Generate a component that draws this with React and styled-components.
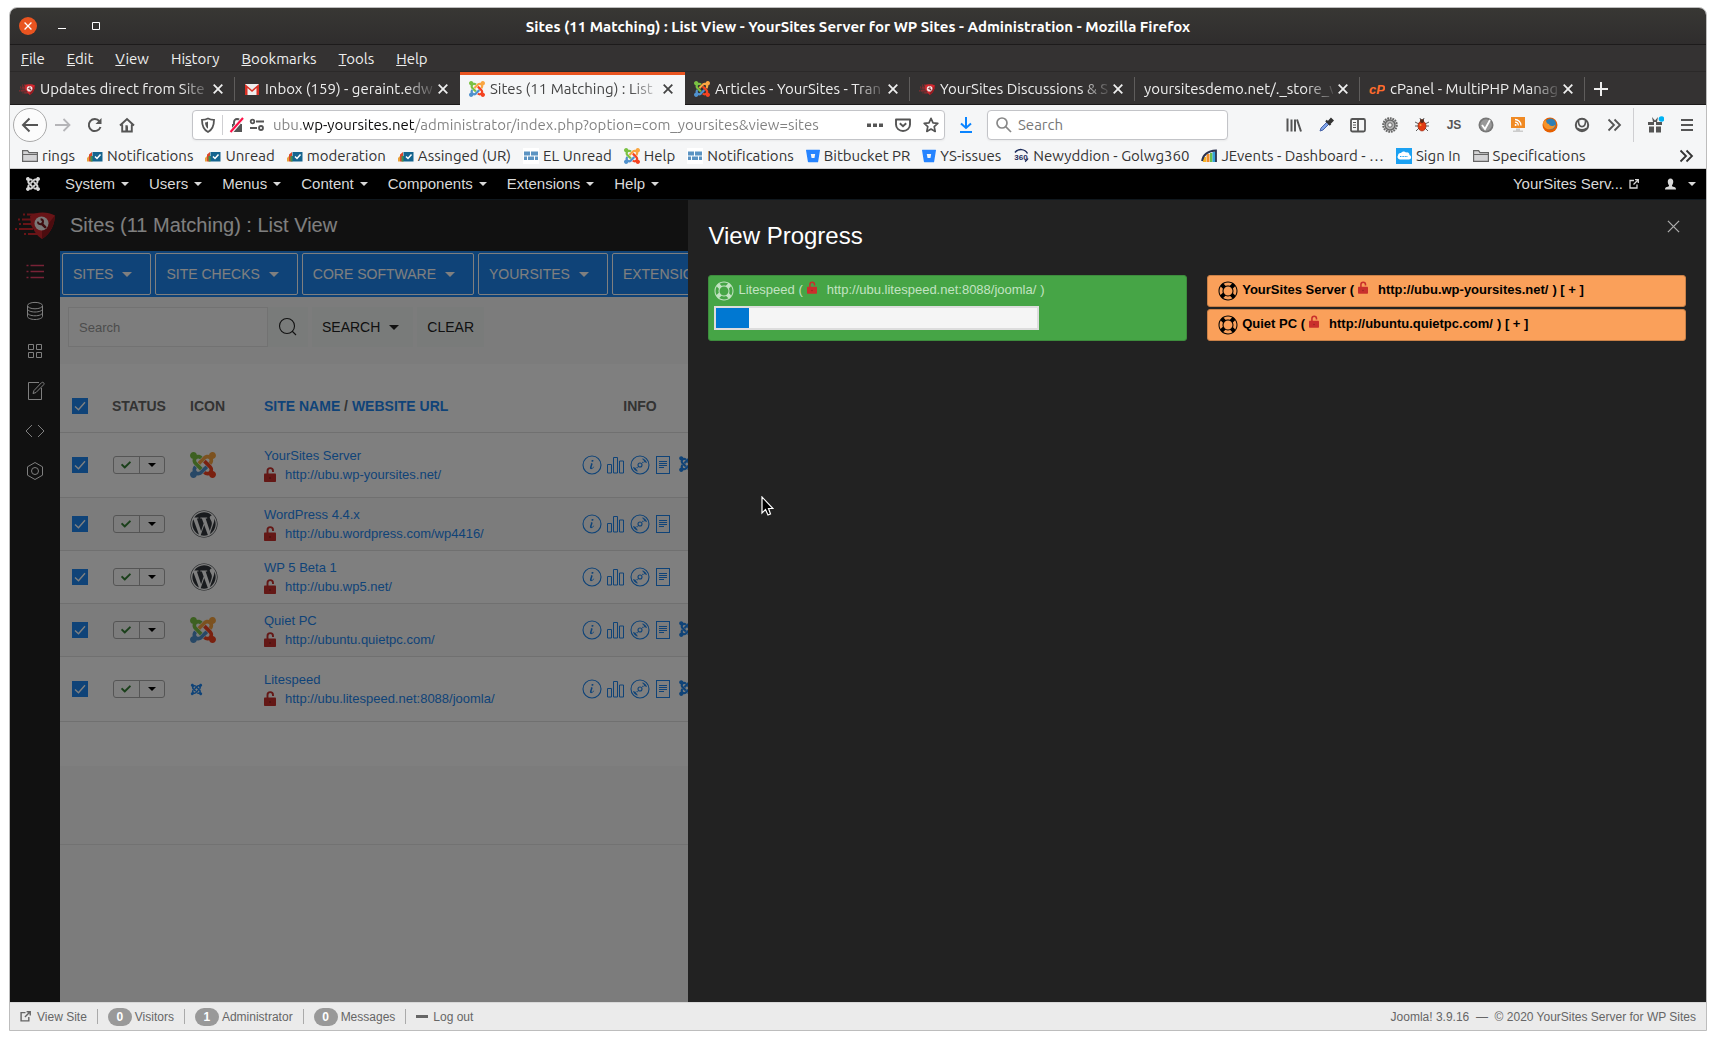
import React from "react";
import styled, { createGlobalStyle, css } from "styled-components";
import { FaJoomla, FaWordpress, FaCheck } from "react-icons/fa";
import { SiBitbucket } from "react-icons/si";

const ui = `"Ubuntu", "Noto Sans", "Open Sans", sans-serif`;
const web = `"Liberation Sans", Arial, sans-serif`;

const Global = createGlobalStyle`
  *, *::before, *::after { box-sizing: border-box; }
  body { margin: 0; background: #fff; font-family: ${web}; }
  button, input { font: inherit; color: inherit; margin: 0; }
  button { padding: 0; border: 0; background: none; cursor: pointer; }
  a { color: inherit; text-decoration: none; }
  svg { display: block; flex: none; }
`;

/* ---------- window frame ---------- */

const Screen = styled.div`
  min-height: 100vh;
  padding: 7px 9px 9px;
  display: flex;
`;

const Window = styled.div`
  flex: 1;
  min-width: 0;
  display: flex;
  flex-direction: column;
  border: 1px solid #bdbdbd;
  border-radius: 8px 8px 0 0;
  overflow: hidden;
  font-family: ${ui};
`;

const TitleBar = styled.header`
  display: grid;
  grid-template-columns: 120px 1fr 120px;
  align-items: center;
  height: 37px;
  padding: 0 9px;
  background: linear-gradient(#383734, #2f2d2d);
  border-bottom: 1px solid #1d1b1b;
  color: #fff;
`;

const WindowTitle = styled.h1`
  margin: 0;
  padding-top: 2px;
  text-align: center;
  font-size: 15px;
  line-height: 20px;
  font-weight: 700;
  white-space: nowrap;
`;

const WindowButtons = styled.div`
  display: flex;
  align-items: center;
  gap: 16px;
`;

const WindowButton = styled.button`
  display: grid;
  place-items: center;
  width: 18px;
  height: 18px;
  border-radius: 50%;
  background: ${(p) => (p.$close ? "#e95420" : "transparent")};
`;

const MenuBar = styled.nav`
  display: flex;
  gap: 22px;
  align-items: center;
  height: 27px;
  padding: 2px 11px 0;
  background: #343232;
  border-bottom: 1px solid #2b2929;
  color: #eee;
`;

const MenuItem = styled.button`
  font-size: 15px;
  line-height: 20px;
`;

const TabStrip = styled.div`
  display: flex;
  height: 33px;
  background: #343232;
  box-shadow: inset 0 -1px #1b1919;
`;

const Tab = styled.div`
  position: relative;
  flex: 0 1 225px;
  min-width: 0;
  display: flex;
  align-items: center;
  gap: 5px;
  padding: 1px 12px 0 9px;
  color: #eee;
  ${(p) =>
    p.$active
      ? css`
          background: #f5f6f7;
          color: #444;
          box-shadow: inset 0 3px #e95420;
        `
      : css`
          &::after {
            content: "";
            position: absolute;
            right: 0;
            top: 5px;
            bottom: 4px;
            width: 1px;
            background: ${p.$bare ? "transparent" : "#5f5d5c"};
          }
        `}
`;

const TabLabel = styled.button`
  flex: 1;
  min-width: 0;
  text-align: left;
  font-size: 15px;
  line-height: 20px;
  white-space: nowrap;
  overflow: hidden;
  mask-image: linear-gradient(to right, #000 calc(100% - 28px), rgba(0, 0, 0, 0.15));
`;

const IconButton = styled.button`
  display: grid;
  place-items: center;
  width: ${(p) => p.$w || 16}px;
  height: ${(p) => p.$h || 20}px;
  flex: none;
  color: ${(p) => p.$color || "inherit"};
`;

const NewTab = styled(IconButton)`
  width: 32px;
  height: 33px;
  color: #eee;
`;

/* ---------- browser toolbar ---------- */

const NavBar = styled.div`
  display: flex;
  align-items: center;
  height: 40px;
  padding: 0 3px;
  background: #f5f6f7;
  color: #555;
`;

const BackButton = styled(IconButton)`
  width: 34px;
  height: 34px;
  border: 1px solid #aaa;
  border-radius: 50%;
  background: #fcfcfc;
`;

const Field = styled.div`
  display: flex;
  align-items: center;
  height: 30px;
  border: 1px solid #c3c4c8;
  border-radius: 4px;
  background: #fff;
  box-shadow: 0 1px 2px rgba(0, 0, 0, 0.05);
`;

const UrlField = styled(Field)`
  flex: 744 1 0;
  margin-left: 49px;
  padding-left: 7px;
`;

const SearchField = styled(Field)`
  flex: 223 1 0;
  padding: 0 8px;
`;

const TextInput = styled.input`
  flex: 1;
  min-width: 0;
  border: 0;
  outline: 0;
  background: transparent;
  font-size: 15px;
  line-height: 20px;
  padding: 0 6px;
  color: #333;
  &::placeholder {
    color: #777;
    opacity: 1;
  }
`;

const UrlInput = styled(TextInput)`
  padding: 0 0 0 4px;
  color: transparent;
  background: linear-gradient(to right, #808080 33px, #0c0c0d 33px, #0c0c0d 145px, #808080 145px);
  background-clip: text;
  -webkit-background-clip: text;
`;

const Divider = styled.span`
  width: 1px;
  height: ${(p) => p.$h}px;
  margin: ${(p) => p.$m || "0"};
  background: ${(p) => p.$color || "#cfcfd2"};
`;

const Extensions = styled.div`
  display: flex;
  align-items: center;
  margin-left: 50px;
`;

const JsButton = styled(IconButton)`
  font: 700 12px/16px ${web};
`;

const BookmarkBar = styled.nav`
  display: flex;
  align-items: center;
  gap: 12px;
  height: 24px;
  padding: 0 12px 2px;
  background: #f5f6f7;
  border-bottom: 1px solid #ccc;
  color: #333;
`;

const Bookmark = styled.a`
  display: flex;
  align-items: center;
  gap: 4px;
  font-size: 15px;
  line-height: 20px;
  white-space: nowrap;
`;

const Grow = styled.span`
  flex: 1;
`;

/* ---------- Joomla admin ---------- */

const AdminBar = styled.nav`
  display: flex;
  align-items: center;
  gap: 20px;
  height: 31px;
  padding: 0 10px 0 15px;
  background: #000;
  border-bottom: 1px solid #10181e;
  color: #d9d9d9;
  font-family: ${web};
`;

const AdminItem = styled.button`
  display: flex;
  align-items: center;
  gap: 6px;
  font-size: 15px;
  line-height: 20px;
  white-space: nowrap;
`;

const AdminLogo = styled.a`
  margin-right: 4px;
`;

const AdminLink = styled.a`
  display: flex;
  align-items: center;
  gap: 6px;
  font-size: 15px;
  line-height: 20px;
  margin-right: 6px;
`;

const Caret = styled.span`
  width: 0;
  height: 0;
  border: ${(p) => p.$s || 4}px solid transparent;
  border-top-color: currentColor;
  border-bottom: 0;
`;

const Stage = styled.div`
  position: relative;
  flex: 1;
  display: flex;
  overflow: hidden;
  font-family: ${web};
`;

const SideRail = styled.aside`
  width: 50px;
  flex: none;
  display: flex;
  flex-direction: column;
  align-items: center;
  background: #222;
  color: #fff;
`;

const RailLogo = styled.div`
  display: grid;
  place-items: center;
  height: 51px;
`;

const RailButton = styled.button`
  display: grid;
  place-items: center;
  width: 50px;
  height: 40px;
  color: ${(p) => (p.$active ? "#f0446c" : "inherit")};
`;

const Content = styled.main`
  flex: 1;
  min-width: 0;
  display: flex;
  flex-direction: column;
  background: #f8f8f8;
`;

const PageHeading = styled.h2`
  margin: 0;
  padding: 0 10px;
  height: 51px;
  background: #222;
  color: #fff;
  font-weight: 400;
  font-size: 20px;
  line-height: 50px;
`;

const ActionBar = styled.div`
  display: flex;
  gap: 4px;
  padding: 2px;
  height: 46px;
  background: #1e87f0;
`;

const ActionButton = styled.button`
  display: flex;
  align-items: center;
  gap: 9px;
  padding: 0 18px 0 10px;
  border: 1px solid #fff;
  border-radius: 2px;
  color: #fff;
  font-size: 14px;
  line-height: 20px;
  text-transform: uppercase;
  white-space: nowrap;
`;

const FilterBar = styled.div`
  display: flex;
  padding: 10px 8px 17px;
`;

const FilterInput = styled.input`
  width: 200px;
  height: 40px;
  padding: 0 10px;
  border: 1px solid #e5e5e5;
  background: #fbfbfb;
  font-size: 13px;
  &::placeholder {
    color: #999;
    opacity: 1;
  }
`;

const FilterButton = styled.button`
  display: flex;
  align-items: center;
  justify-content: center;
  gap: 9px;
  height: 40px;
  padding: 0 ${(p) => (p.$menu ? 14 : 10)}px 0 10px;
  margin-right: 4px;
  background: #f3f7f5;
  color: #222;
  font-size: 14px;
  line-height: 20px;
  text-transform: uppercase;
`;

const TableCard = styled.section`
  padding: 16px 0 44px;
  background: #fff;
`;

const FooterCard = styled.section`
  height: 79px;
  border-bottom: 1px solid #e5e5e5;
`;

const SitesTable = styled.table`
  width: 100%;
  table-layout: fixed;
  border-collapse: separate;
  border-spacing: 0;
`;

const Col = styled.col`
  width: ${(p) => (p.$w ? `${p.$w}px` : "auto")};
`;

const HeadRow = styled.tr`
  height: 53px;
`;

const Head = styled.th`
  padding: 0 12px;
  border-bottom: 1px solid #e0e0e0;
  text-align: ${(p) => p.$align || "left"};
  font-size: 14px;
  line-height: 20px;
  font-weight: 700;
  color: #666;
  text-transform: uppercase;
  white-space: nowrap;
`;

const HeadLink = styled.a`
  color: #1e87f0;
`;

const Row = styled.tr`
  height: ${(p) => (p.$tall ? 65 : 53)}px;
  background: ${(p) => (p.$striped ? "#f8f8f8" : "#fff")};
`;

const Cell = styled.td`
  padding: 0 12px;
  border-bottom: 1px solid #e0e0e0;
  vertical-align: middle;
`;

const Check = styled.input`
  display: block;
  appearance: none;
  width: 16px;
  height: 16px;
  background: #1e87f0
    url("data:image/svg+xml,%3Csvg xmlns='http://www.w3.org/2000/svg' viewBox='0 0 16 16'%3E%3Cpath d='M3 8.5l3.5 3.3L13 4.3' fill='none' stroke='white' stroke-width='1.4'/%3E%3C/svg%3E");
`;

const StatusGroup = styled.div`
  display: flex;
  width: 52px;
  height: 18px;
  margin-left: 1px;
  border: 1px solid #aaa;
  border-radius: 3px;
`;

const StatusButton = styled.button`
  flex: 1;
  display: grid;
  place-items: center;
  color: ${(p) => p.$color};
  & + & {
    border-left: 1px solid #aaa;
  }
`;

const SiteName = styled.a`
  display: block;
  font-size: 13px;
  line-height: 19px;
  color: #1e87f0;
`;

const SiteUrl = styled(SiteName)`
  display: flex;
  align-items: center;
  gap: 9px;
  white-space: nowrap;
`;

const InfoIcons = styled.div`
  display: flex;
  gap: 4px;
  color: #1e87f0;
`;

const Overlay = styled.div`
  position: absolute;
  inset: 0;
  background: rgba(0, 0, 0, 0.5);
`;

const Panel = styled.section`
  position: absolute;
  top: 0;
  right: 0;
  bottom: 0;
  width: 60%;
  padding: 20px;
  background: #222;
  color: #fff;
`;

const PanelHead = styled.header`
  display: flex;
  justify-content: space-between;
  padding-right: 7px;
  margin-bottom: 23px;
`;

const PanelTitle = styled.h2`
  margin: 0;
  font-size: 24px;
  line-height: 32px;
  font-weight: 400;
`;

const Queues = styled.div`
  display: grid;
  grid-template-columns: 1fr 1fr;
  align-items: start;
  gap: 20px;
`;

const Waiting = styled.div`
  display: grid;
  gap: 2px;
`;

const Job = styled.article`
  border: 1px solid ${(p) => (p.$running ? "#3d8c3d" : "#c98047")};
  border-radius: 3px;
  padding: ${(p) => (p.$running ? "5px 5px 10px" : "5px 10px")};
  background: ${(p) => (p.$running ? "#46a546" : "#faa05a")};
  color: ${(p) => (p.$running ? "#c2e3c2" : "#000")};
  font-weight: ${(p) => (p.$running ? 400 : 700)};
`;

const JobLine = styled.div`
  display: flex;
  gap: 4px;
  font-size: 13px;
  line-height: 18px;
  height: 20px;
  white-space: nowrap;
`;

const JobUrl = styled.a`
  margin-left: 6px;
`;

const Meter = styled.div`
  width: 325px;
  height: 24px;
  margin-top: 5px;
  border: 2px solid #ddd;
  background: #f5f5f5;
`;

const MeterFill = styled.div`
  height: 100%;
  background: #0078d2;
`;

const Pointer = styled.svg`
  position: absolute;
  left: 73px;
  top: 296px;
`;

const StatusBar = styled.footer`
  display: flex;
  align-items: center;
  gap: 10px;
  height: 28px;
  padding: 0 10px;
  background: #ebebeb;
  border-top: 1px solid #d8d8d8;
  color: #666;
  font-family: ${web};
  font-size: 12px;
  line-height: 18px;
`;

const StatusItem = styled.a`
  display: flex;
  align-items: center;
  gap: ${(p) => p.$gap || 3}px;
`;

const Badge = styled.span`
  width: 24px;
  height: 18px;
  border-radius: 9px;
  background: #999;
  color: #fff;
  font-weight: 700;
  text-align: center;
`;

/* ---------- drawings ---------- */

const Svg = ({ w = 16, h, box, children, ...rest }) => (
  <svg width={w} height={h || w} viewBox={box || `0 0 ${w} ${h || w}`} fill="none" stroke="currentColor" aria-hidden="true" {...rest}>
    {children}
  </svg>
);

const joomlaArms = [
  ["#7ac143", "M.6 92.1C.6 58.8 27.4 32 60.4 32c30 0 54.5 21.9 59.2 50.2 32.6-7.6 67.1.6 96.5 30l-44.3 44.3c-20.5-20.5-42.6-16.3-55.4-3.5-14.3 14.3-14.3 37.9 0 52.2l99.5 99.5-44 44.3c-87.7-87.2-49.7-49.7-99.8-99.7-26.8-26.5-35-64.8-24.8-98.9C20.4 144.6.6 120.7.6 92.1z"],
  ["#f9a541", "M130.1 208.5l44.3 44.3c10-10 89.7-89.7 99.7-99.8 14.3-14.3 37.6-14.3 51.9 0 12.8 12.8 17 35-3.5 55.4l44 44.3c31.2-31.2 38.5-67.6 28.9-101.2 29.2-4.1 51.9-29.2 51.9-59.5 0-33.2-26.8-60.1-59.8-60.1-30.3 0-55.4 22.5-59.5 51.6-33.8-9.9-71.7-1.5-98.3 25.1-18.3 19.1-71.1 71.5-99.6 99.9z"],
  ["#f44321", "M396.4 360.7c8.2-32.7-.9-68.5-26.3-93.9-11.8-12.2 5 4.7-99.5-99.7l-44.3 44.3 99.7 99.7c14.3 14.3 14.3 37.6 0 51.9-12.8 12.8-35 17-55.4-3.5l-44 44.3c27.6 30.2 68 38.8 102.7 28 5.5 27.4 29.7 48.1 58.9 48.1 33 0 59.8-26.8 59.8-60.1 0-29.9-22.8-54.4-51.6-59.1z"],
  ["#5091cd", "M312.1 307.6l-44-44.3c-87 86.4-50.4 50.4-99.7 99.8-14.3 14.3-37.6 14.3-51.9 0-13.1-13.4-16.9-35.3 3.2-55.4l-44-44.3c-30.2 30.2-38 65.2-29.5 98.3-26.7 6-46.2 29.9-46.2 58.2C0 453.2 26.8 480 59.8 480c28.6 0 52.5-19.8 58.6-46.7 32.7 8.2 68.5-.6 94.2-26 32.1-32 12.2-12.4 99.5-99.7z"],
];

const JoomlaColor = ({ size = 16 }) => (
  <Svg w={size} box="0 32 448 448" stroke="none">
    {joomlaArms.map(([fill, d]) => (
      <path key={fill} fill={fill} d={d} />
    ))}
  </Svg>
);

const Rocket = ({ w = 16 }) => (
  <Svg w={w} h={Math.round(w * 0.68)} box="0 0 40 27" stroke="none">
    <path d="M15 4C20 0 32-1 40 3.500 39.500 13 36 21 27 27c-3-2-5-4-7-7l-4-7z" fill="#d2282f" />
    <path d="M27 27C36 21 39.500 13 40 3.500L33 12l-6 6z" fill="#98191f" />
    <path d="M8 2.500h14M3 7.500h16M4 12h15M0 17h18M9 22h14" stroke="#d2282f" strokeWidth="2" strokeDasharray="2 2 40" />
    <circle cx="26.500" cy="11.500" r="7" fill="#f4eeee" />
    <path d="M26.800 11.800l3.400 3.400" stroke="#7d1a20" strokeWidth="2.600" strokeLinecap="round" />
    <path d="M23 9.600a2.500 2.500 0 1 0 2.600-2.400" stroke="#7d1a20" strokeWidth="2" />
  </Svg>
);

const CPanel = () => (
  <Svg stroke="none">
    <text x="8" y="12.500" textAnchor="middle" fontFamily="Liberation Sans, sans-serif" fontWeight="700" fontStyle="italic" fontSize="13" fill="#ff6c2c">cP</text>
  </Svg>
);

const CloseMark = ({ size = 10, sw = 1.8 }) => (
  <Svg w={size} box="0 0 10 10" strokeWidth={sw}>
    <path d="M.7.7l8.600 8.600M9.300.7L.7 9.300" />
  </Svg>
);

const Gmail = () => (
  <Svg stroke="none">
    <path d="M1 3h14v11H1z" fill="#eee" />
    <path d="M1 14V3l7 6 7-6v11h-2.500V7L8 11 3.500 7v7z" fill="#d93025" />
  </Svg>
);

const Folder = () => (
  <Svg>
    <path d="M.6 13.400V2.600h5l1.400 2h8.400v8.800z" fill="#d4d4d6" stroke="#666" strokeWidth="1.200" />
    <path d="M1 6.500h14" stroke="#666" />
  </Svg>
);

const Forum = () => (
  <Svg stroke="none">
    <path d="M2 13.500V6.500L5 4v9.500z" fill="#d8472b" />
    <path d="M0 13.500V10l2-2v5.500z" fill="#e9a13b" />
    <path d="M3.500 13.500V8H6v5.500z" fill="#3f8f4f" />
    <rect x="5.500" y="4" width="10" height="9.500" fill="#14648f" />
    <path d="M8 8.500l2 2 3.500-4" stroke="#fff" strokeWidth="1.500" />
  </Svg>
);

const Bricks = () => (
  <Svg stroke="none">
    <path fill="#fff" d="M0 0h16v16H0z" />
    <path fill="#5b93c2" d="M1 3.500h6v4H1zM8 3.500h7v4H8zM1 8.500h3v3.500H1zM5 8.500h6v3.500H5zM12 8.500h3v3.500h-3z" />
  </Svg>
);

const Badge360 = () => (
  <Svg stroke="none">
    <path d="M2 4.500a7.500 7.500 0 0 1 12.500 1M12 13.500a8 8 0 0 0 3-3" stroke="#1d2c5b" strokeWidth="1.500" />
    <text x="8" y="11.500" textAnchor="middle" fontFamily="Liberation Sans, sans-serif" fontWeight="700" fontSize="8" fill="#1d2c5b">360</text>
  </Svg>
);

const Analytics = () => (
  <Svg stroke="none">
    <path d="M2 14V9h3v5z" fill="#f5b324" />
    <path d="M5.500 14V6h3v8z" fill="#f28c28" />
    <path d="M9 14V5h2.500v9z" fill="#6bbf4b" />
    <path d="M11.500 14V4H15v10z" fill="#35a3d8" />
    <path d="M1 13C2 7 6 3 15 2.500V14" stroke="#2b3350" strokeWidth="1.800" />
  </Svg>
);

const Cloud = () => (
  <Svg stroke="none">
    <path fill="#1ba1f2" d="M0 0h16v16H0z" />
    <path fill="#fff" d="M4 11.500a2.500 2.500 0 0 1-2-4 2.500 2.500 0 0 1 3-2.500 3 3 0 0 1 5-.5 2.500 2.500 0 0 1 3.500 2.500 2.300 2.300 0 0 1-.5 4.500z" />
    <path stroke="#1ba1f2" d="M4 8.500h8" strokeDasharray="1 .6" />
  </Svg>
);

const Lock = ({ w = 12, h = 15, color = "#c9302c" }) => (
  <Svg w={w} h={h} box="0 0 12 15" stroke="none">
    <path d="M3.500 7V3.900a2.700 2.700 0 0 1 5.500 0V5" stroke={color} strokeWidth="1.900" />
    <rect y="6.500" width="12" height="8.500" rx=".8" fill={color} />
    <circle cx="6" cy="11" r=".9" fill="#0004" />
  </Svg>
);

const LifeRing = () => (
  <Svg w={20} stroke="none">
    <path fill="currentColor" d="M10,0.5 C4.76,0.5 0.5,4.76 0.5,10 C0.5,15.24 4.76,19.5 10,19.5 C15.24,19.5 19.5,15.24 19.5,10 C19.5,4.76 15.24,0.5 10,0.5 Z M10,1.5 C11.49,1.5 12.89,1.88 14.11,2.56 L11.85,4.82 C11.27,4.61 10.65,4.5 10,4.5 C9.21,4.5 8.47,4.67 7.79,4.96 L5.58,2.75 C6.87,1.95 8.38,1.5 10,1.5 Z M4.96,7.8 C4.67,8.48 4.5,9.21 4.5,10 C4.5,10.65 4.61,11.27 4.83,11.85 L2.56,14.11 C1.88,12.89 1.5,11.49 1.5,10 C1.5,8.38 1.95,6.87 2.75,5.58 L4.96,7.79 Z M10,18.5 C8.25,18.5 6.62,17.97 5.27,17.06 L7.46,14.87 C8.22,15.27 9.08,15.5 10,15.5 C10.79,15.5 11.53,15.33 12.21,15.04 L14.42,17.25 C13.13,18.05 11.62,18.5 10,18.5 Z M10,14.5 C7.52,14.5 5.5,12.48 5.5,10 C5.5,7.52 7.52,5.5 10,5.5 C12.48,5.5 14.5,7.52 14.5,10 C14.5,12.48 12.48,14.5 10,14.5 Z M15.04,12.21 C15.33,11.53 15.5,10.79 15.5,10 C15.5,9.08 15.27,8.22 14.87,7.46 L17.06,5.27 C17.97,6.62 18.5,8.25 18.5,10 C18.5,11.62 18.05,13.13 17.25,14.42 L15.04,12.21 Z" />
  </Svg>
);

const External = ({ size = 10 }) => (
  <Svg w={size} box="0 0 10 10" strokeWidth="1.300">
    <path d="M5 1.500H1v7.500h7V5.500M6 .7h3.300V4M9 1L4.500 5.500" />
  </Svg>
);

const InfoIcon = () => (
  <Svg w={20} strokeWidth="1.100">
    <circle cx="10" cy="10" r="9" />
    <path stroke="none" fill="currentColor" d="M12.13,11.59 C11.97,12.84 10.35,14.12 9.1,14.16 C6.17,14.2 9.89,9.46 8.74,8.37 C9.3,8.16 10.62,7.83 10.62,8.81 C10.62,9.63 10.12,10.55 9.88,11.32 C8.66,15.16 12.13,11.15 12.14,11.18 C12.16,11.21 12.16,11.35 12.13,11.59 Z M11.56,5.67 C11.56,6.67 9.36,7.15 9.36,6.03 C9.36,5 11.56,4.54 11.56,5.67 Z" />
  </Svg>
);

const BarsIcon = () => (
  <Svg w={20}>
    <path d="M1.500 9.500h4v8.500h-4zM7.500 2.500h4V18h-4zM13.500 6h4v12h-4z" />
  </Svg>
);

const DiscIcon = () => (
  <Svg w={20} strokeWidth="1.100">
    <circle cx="10" cy="10" r="9" />
    <circle cx="10" cy="10" r="2" />
    <path d="M12.500 7a3.500 3.500 0 0 1 .7 1M13.500 5a6 6 0 0 1 1.800 2.200M12.500 3.800a7 7 0 0 1 4 4M7.500 13a3.500 3.500 0 0 1-.7-1M6.500 15a6 6 0 0 1-1.800-2.200M7.500 16.200a7 7 0 0 1-4-4" />
  </Svg>
);

const DocIcon = () => (
  <Svg w={20}>
    <rect x="2.500" y="1.500" width="13" height="17" />
    <path d="M5 6.500h8M5 8.500h8M5 10.500h8M5 12.500h5" />
  </Svg>
);

const railIcons = [
  ["Sites", <Svg w={20} key="a"><path d="M5.500 4.500H19M5.500 10.500H19M5.500 16.500H19M1.500 4.500h2M1.500 10.500h2M1.500 16.500h2" strokeWidth="1.600" /></Svg>],
  ["Database", <Svg w={20} key="b"><ellipse cx="10" cy="4.600" rx="7.500" ry="3.200" /><path d="M17.500 5v10.500c0 1.500-3.300 3-7.500 3s-7.500-1.500-7.500-3V5M2.500 8c0 1.600 3.300 3 7.500 3s7.500-1.400 7.500-3M2.500 11.800c0 1.600 3.300 3 7.500 3s7.500-1.400 7.500-3" /></Svg>],
  ["Grid", <Svg w={20} key="c"><path d="M3.500 3.500h5v5h-5zM11.500 3.500h5v5h-5zM3.500 11.500h5v5h-5zM11.500 11.500h5v5h-5z" /></Svg>],
  ["Edit", <Svg w={20} key="d"><path d="M14 1.500H3.500v17h13V7M18.600 1.700c-.6-.6-1.500-.5-2.100 0L9 9.500l-1 3 3-1 7.600-7.700c.6-.6.6-1.500 0-2.100z" /></Svg>],
  ["Code", <Svg w={20} key="e"><path d="M7 4L1 10l6 6M13 4l6 6-6 6" /></Svg>],
  ["Settings", <Svg w={20} key="f"><path d="M10 1.500l7.500 4.300v8.400L10 18.500l-7.500-4.300V5.800z" /><circle cx="10" cy="10" r="3.500" /></Svg>],
];

/* ---------- data ---------- */

const menus = [["", "F", "ile"], ["", "E", "dit"], ["", "V", "iew"], ["Hi", "s", "tory"], ["", "B", "ookmarks"], ["", "T", "ools"], ["", "H", "elp"]];

const tabs = [
  { icon: <Rocket />, label: "Updates direct from Site" },
  { icon: <Gmail />, label: "Inbox (159) - geraint.edw", bare: true },
  { icon: <JoomlaColor />, label: "Sites (11 Matching) : List", active: true },
  { icon: <JoomlaColor />, label: "Articles - YourSites - Tran" },
  { icon: <Rocket />, label: "YourSites Discussions & S" },
  { label: "yoursitesdemo.net/._store_v" },
  { icon: <CPanel />, label: "cPanel - MultiPHP Manag" },
];

const bookmarks = [
  [<Folder />, "rings"],
  [<Forum />, "Notifications"],
  [<Forum />, "Unread"],
  [<Forum />, "moderation"],
  [<Forum />, "Assinged (UR)"],
  [<Bricks />, "EL Unread"],
  [<JoomlaColor />, "Help"],
  [<Bricks />, "Notifications"],
  [<SiBitbucket size={14} color="#2684ff" />, "Bitbucket PR"],
  [<SiBitbucket size={14} color="#2684ff" />, "YS-issues"],
  [<Badge360 />, "Newyddion - Golwg360"],
  [<Analytics />, "JEvents - Dashboard - …"],
  [<Cloud />, "Sign In"],
  [<Folder />, "Specifications"],
];

const toolIcons = [
  ["Library", <Svg key="1" strokeWidth="2"><path d="M1.500 1.500v13M5.500 2.500v12M9 2.500v12M11 2.500l4 12" /></Svg>],
  ["Color picker", <Svg key="2"><path d="M2 14l1-3 6-6 2 2-6 6z" fill="#7fa3e8" stroke="#4763a8" /><path d="M8 3.500L12.500 8M10 5.500l3-3.500 1.500 1.500-3 3z" stroke="#333" strokeWidth="2.200" /></Svg>],
  ["Sidebar", <Svg key="3" strokeWidth="1.800"><rect x="1" y="2" width="14" height="12.500" rx="1.500" /><path d="M8 2v12" /><path d="M3 5.500h3M3 8h3M3 10.500h3" strokeWidth="1" /></Svg>],
  ["Gear", <Svg key="4" stroke="#666"><circle cx="8" cy="8" r="6.700" strokeWidth="2.200" strokeDasharray="1.800 .8" /><circle cx="8" cy="8" r="5" fill="#b4b4b4" strokeWidth="1.400" /><circle cx="8" cy="8" r="2.200" fill="#f5f5f5" /></Svg>],
  ["Firebug", <Svg key="5" stroke="#333"><path d="M1 5l4 2M15 5l-4 2M1 9h3M15 9h-3M2 14l3-3M14 14l-3-3M6 1l1 3M10 1L9 4" strokeWidth=".8" /><ellipse cx="8" cy="9" rx="4" ry="5" fill="#e23b12" stroke="#8d1c05" strokeWidth=".6" /><circle cx="8" cy="4" r="2" fill="#5a2a1a" stroke="none" /><circle cx="6.500" cy="8" r="1" fill="#f9a03a" stroke="none" /></Svg>],
  ["JS"],
  ["Check", <Svg key="7" stroke="none"><circle cx="8" cy="8" r="7.500" fill="#777" /><circle cx="8" cy="8" r="5.800" fill="#9a9a9a" /><path d="M4 8l3 4 5-9" stroke="#fff" strokeWidth="1.800" /></Svg>],
  ["Feeds", <Svg key="8" stroke="none"><rect x="1" y="0" width="14" height="11" fill="#f08a24" /><path d="M6 11.500h4v2h3v1.500H3v-1.500h3z" fill="#ccc" /><path d="M5 2.500a6 6 0 0 1 6 6M5 5.200a3.300 3.300 0 0 1 3.300 3.300" stroke="#fff" strokeWidth="1.300" /><circle cx="5.600" cy="8" r="1" fill="#fff" /></Svg>],
  ["Firefox", <Svg key="9" stroke="none"><circle cx="8" cy="8" r="7.500" fill="#e66000" /><circle cx="8.500" cy="7" r="5.500" fill="#2f7fb5" /><path d="M1 5c0 6 4 8 8 7 2 0 4-2 4.500-4.500C11 10 7 9 7 7 5 7 4 5 4 3z" fill="#f5932a" /></Svg>],
  ["Account", <Svg key="10" strokeWidth="2"><circle cx="8" cy="8" r="6.200" /><path d="M5 4.500h6v2a3 3 0 0 1-6 0z" fill="#f5f6f7" stroke="none" /><path d="M4.500 4c0 7.500 7 7.500 7 0" strokeWidth="1.600" /><path d="M3.500 11.500c3 2 6 2 9 0" /></Svg>],
  ["More tools", <Svg key="11" strokeWidth="1.800"><path d="M2.500 2.500L8 8l-5.500 5.500M8.500 2.500L14 8l-5.500 5.500" /></Svg>],
];

const adminMenus = ["System", "Users", "Menus", "Content", "Components", "Extensions", "Help"];

const actions = ["Sites", "Site Checks", "Core Software", "YourSites", "Extensions"];

const sites = [
  { name: "YourSites Server", url: "http://ubu.wp-yoursites.net/", kind: "joomla", tall: true },
  { name: "WordPress 4.4.x", url: "http://ubu.wordpress.com/wp4416/", kind: "wp" },
  { name: "WP 5 Beta 1", url: "http://ubu.wp5.net/", kind: "wp" },
  { name: "Quiet PC", url: "http://ubuntu.quietpc.com/", kind: "joomla" },
  { name: "Litespeed", url: "http://ubu.litespeed.net:8088/joomla/", kind: "small", tall: true },
];

const kindIcon = {
  joomla: <JoomlaColor size={26} />,
  wp: <FaWordpress size={28} color="#32373c" />,
  small: <FaJoomla size={13} color="#1e87f0" />,
};

const JobInfo = ({ name, url, tail }) => (
  <JobLine>
    <LifeRing />
    <span>{name} (</span>
    <Lock w={10} h={13} />
    <JobUrl href="#">{url}</JobUrl>
    <span>{tail}</span>
  </JobLine>
);

function BrowserChrome() {
  return (
    <>
      <TitleBar>
        <WindowButtons>
          <WindowButton $close aria-label="Close window"><CloseMark size={8} sw={1.6} /></WindowButton>
          <WindowButton aria-label="Minimise"><Svg w={8}><path d="M0 6.500h8" /></Svg></WindowButton>
          <WindowButton aria-label="Maximise"><Svg w={8}><path d="M.5.5h7v7h-7z" /></Svg></WindowButton>
        </WindowButtons>
        <WindowTitle>Sites (11 Matching) : List View - YourSites Server for WP Sites - Administration - Mozilla Firefox</WindowTitle>
      </TitleBar>
      <MenuBar>
        {menus.map(([before, key, after]) => (
          <MenuItem key={after}>{before}<u>{key}</u>{after}</MenuItem>
        ))}
      </MenuBar>
      <TabStrip>
        {tabs.map((t) => (
          <Tab key={t.label} $active={t.active} $bare={t.bare}>
            {t.icon}
            <TabLabel>{t.label}</TabLabel>
            <IconButton $w={10} aria-label={`Close ${t.label}`}><CloseMark /></IconButton>
          </Tab>
        ))}
        <NewTab aria-label="New tab"><Svg w={14} strokeWidth="2"><path d="M7 0v14M0 7h14" /></Svg></NewTab>
      </TabStrip>
      <NavBar>
        <BackButton aria-label="Back"><Svg w={18} strokeWidth="2"><path d="M17 9H2M8.500 2.500L2 9l6.500 6.500" /></Svg></BackButton>
        <IconButton $w={32} $h={32} $color="#b5b5b8" aria-label="Forward"><Svg strokeWidth="1.800"><path d="M0 8h14.500M8.500 2l6 6-6 6" /></Svg></IconButton>
        <IconButton $w={32} $h={32} aria-label="Reload"><Svg strokeWidth="2"><path d="M13.500 10A6 6 0 1 1 12.500 4.300" /><path d="M14.500 1v6h-6z" fill="currentColor" stroke="none" /></Svg></IconButton>
        <IconButton $w={32} $h={32} aria-label="Home"><Svg strokeWidth="1.900"><path d="M1 8.500l7-6.500 7 6.500M3.200 7.500V14.500h9.600V7.500" /><path d="M7.700 14V9.500h1" strokeWidth="2.600" /></Svg></IconButton>
        <UrlField>
          <IconButton aria-label="Tracking protection"><Svg strokeWidth="1.800"><path d="M8 1.500c2 1 4 1.300 6 1.300C14 9 12 13 8 15 4 13 2 9 2 2.800c2 0 4-.3 6-1.300z" /><path d="M8 4.500c-1 .6-2 .8-3 .9.200 3.100 1.200 5 3 6.300z" fill="currentColor" stroke="none" /></Svg></IconButton>
          <Divider $h={20} $m="0 6px" />
          <IconButton aria-label="Connection not secure"><Svg><path d="M5 7V5a3 3 0 0 1 6 0v2" strokeWidth="1.900" /><path d="M3 7h10v8H3z" fill="currentColor" stroke="none" /><path d="M2 15L14 1" stroke="#f5f6f7" strokeWidth="4" /><path d="M1.500 15L14 1" stroke="#ff0f45" strokeWidth="2" /></Svg></IconButton>
          <IconButton $w={24} aria-label="Permissions"><Svg strokeWidth="1.800"><circle cx="3.500" cy="4.500" r="1.800" /><path d="M7 4.500h8M1 11h7" /><circle cx="12" cy="11" r="2" /></Svg></IconButton>
          <UrlInput aria-label="Address" defaultValue="ubu.wp-yoursites.net/administrator/index.php?option=com_yoursites&view=sites" />
          <IconButton $w={26} aria-label="Page actions"><Svg stroke="none"><path fill="currentColor" d="M0 6.500h4v3.500H0zM6 6.500h4v3.500H6zM12 6.500h4v3.500h-4z" /></Svg></IconButton>
          <IconButton $w={30} aria-label="Save to Pocket"><Svg strokeWidth="1.900"><path d="M1 2.500h14v5a7 6.500 0 0 1-14 0z" strokeLinejoin="round" /><path d="M4.800 6.300L8 9.300l3.200-3" /></Svg></IconButton>
          <IconButton $w={26} aria-label="Bookmark this page"><Svg strokeWidth="1.700"><path d="M8 1.300l2 4.500 4.800.5-3.600 3.300 1 4.800L8 12l-4.200 2.400 1-4.800L1.200 6.300 6 5.800z" strokeLinejoin="round" /></Svg></IconButton>
        </UrlField>
        <IconButton $w={42} $h={32} $color="#0a84ff" aria-label="Downloads"><Svg strokeWidth="2"><path d="M8 0v11M3 6.500L8 11l5-4.500M2 15h12" /></Svg></IconButton>
        <SearchField>
          <IconButton $color="#888" aria-label="Search"><Svg strokeWidth="1.700"><circle cx="6" cy="6" r="5" /><path d="M9.700 9.700L15 15" /></Svg></IconButton>
          <TextInput aria-label="Search the web" placeholder="Search" />
        </SearchField>
        <Extensions>
          {toolIcons.map(([label, icon]) =>
            icon ? <IconButton key={label} $w={32} $h={32} aria-label={label}>{icon}</IconButton> : <JsButton key={label} $w={32} $h={32}>JS</JsButton>
          )}
          <Divider $h={34} $m="0 5px 0 3px" />
          <IconButton $w={32} $h={32} aria-label="What's new"><Svg w={18} stroke="none"><path fill="currentColor" d="M2 6h6v3H2zM10 6h6v3h-6zM3 10.500h5v6H3zM10 10.500h5v6h-5zM6 1l3 3.500L12 1l-1 5H7z" /><circle cx="15.500" cy="3" r="2.800" fill="#00b3f4" /></Svg></IconButton>
          <IconButton $w={32} $h={32} aria-label="Open menu"><Svg w={12} h={16} strokeWidth="2"><path d="M0 3h12M0 8h12M0 13h12" /></Svg></IconButton>
        </Extensions>
      </NavBar>
      <BookmarkBar>
        {bookmarks.map(([icon, label], i) => (
          <Bookmark href="#" key={i}>{icon}{label}</Bookmark>
        ))}
        <Grow />
        <IconButton aria-label="More bookmarks"><Svg strokeWidth="1.800"><path d="M2.500 2.500L8 8l-5.500 5.500M8.500 2.500L14 8l-5.500 5.500" /></Svg></IconButton>
      </BookmarkBar>
    </>
  );
}

function SiteTable() {
  return (
    <SitesTable>
      <colgroup>
        <Col $w={40} /><Col $w={78} /><Col $w={74} /><Col $w={318} /><Col $w={140} /><Col />
      </colgroup>
      <thead>
        <HeadRow>
          <Head><Check type="checkbox" defaultChecked aria-label="Select all" /></Head>
          <Head>Status</Head>
          <Head>Icon</Head>
          <Head><HeadLink href="#">Site name</HeadLink> / <HeadLink href="#">Website URL</HeadLink></Head>
          <Head $align="center">Info</Head>
          <Head />
        </HeadRow>
      </thead>
      <tbody>
        {sites.map((s, i) => (
          <Row key={s.name} $tall={s.tall} $striped={i % 2 === 1}>
            <Cell><Check type="checkbox" defaultChecked aria-label={`Select ${s.name}`} /></Cell>
            <Cell>
              <StatusGroup>
                <StatusButton $color="#378137" aria-label="Enabled"><FaCheck size={10} /></StatusButton>
                <StatusButton $color="#000" aria-label="Status options"><Caret /></StatusButton>
              </StatusGroup>
            </Cell>
            <Cell>{kindIcon[s.kind]}</Cell>
            <Cell>
              <SiteName href="#">{s.name}</SiteName>
              <SiteUrl href="#"><Lock />{s.url}</SiteUrl>
            </Cell>
            <Cell>
              <InfoIcons>
                <InfoIcon /><BarsIcon /><DiscIcon /><DocIcon />
                {s.kind !== "wp" && <FaJoomla size={18} />}
              </InfoIcons>
            </Cell>
            <Cell />
          </Row>
        ))}
      </tbody>
    </SitesTable>
  );
}

export default function App() {
  return (
    <Screen>
      <Global />
      <Window>
        <BrowserChrome />
        <AdminBar>
          <AdminLogo href="#" aria-label="Joomla"><FaJoomla size={16} /></AdminLogo>
          {adminMenus.map((m) => (
            <AdminItem key={m}>{m}<Caret /></AdminItem>
          ))}
          <Grow />
          <AdminLink href="#">YourSites Serv...<External /></AdminLink>
          <AdminItem aria-label="User menu">
            <Svg w={11} h={12} box="0 0 12 12" stroke="none"><path fill="currentColor" d="M6 0c2 0 3 1.500 3 3.500S8 7 7.500 7.500c0 1 1 1.200 2.500 1.700 1.200.4 2 1 2 2.800H0c0-1.800.8-2.400 2-2.800 1.500-.5 2.500-.7 2.500-1.700C4 7 3 5.500 3 3.500S4 0 6 0z" /></Svg>
            <Grow /><Caret />
          </AdminItem>
        </AdminBar>
        <Stage>
          <SideRail>
            <RailLogo><Rocket w={40} /></RailLogo>
            {railIcons.map(([label, icon], i) => (
              <RailButton key={label} $active={i === 0} aria-label={label}>{icon}</RailButton>
            ))}
          </SideRail>
          <Content>
            <PageHeading>Sites (11 Matching) : List View</PageHeading>
            <ActionBar>
              {actions.map((a) => (
                <ActionButton key={a}>{a}<Caret $s={5} /></ActionButton>
              ))}
            </ActionBar>
            <FilterBar>
              <FilterInput aria-label="Search sites" placeholder="Search" />
              <FilterButton aria-label="Run search"><Svg w={20} strokeWidth="1.100"><circle cx="9" cy="9" r="7.500" /><path d="M14 14l4 4" /></Svg></FilterButton>
              <FilterButton $menu>Search<Caret $s={5} /></FilterButton>
              <FilterButton>Clear</FilterButton>
            </FilterBar>
            <TableCard><SiteTable /></TableCard>
            <FooterCard />
          </Content>
          <Overlay />
          <Panel aria-label="View Progress">
            <PanelHead>
              <PanelTitle>View Progress</PanelTitle>
              <IconButton $w={12} $h={12} $color="#aaa" aria-label="Close panel"><CloseMark size={13} sw={1} /></IconButton>
            </PanelHead>
            <Queues>
              <Job $running>
                <JobInfo name="Litespeed" url="http://ubu.litespeed.net:8088/joomla/" tail=")" />
                <Meter role="progressbar" aria-label="Litespeed progress" aria-valuenow={10}>
                  <MeterFill style={{ width: "10.3%" }} />
                </Meter>
              </Job>
              <Waiting>
                <Job><JobInfo name="YourSites Server" url="http://ubu.wp-yoursites.net/" tail=") [ + ]" /></Job>
                <Job><JobInfo name="Quiet PC" url="http://ubuntu.quietpc.com/" tail=") [ + ]" /></Job>
              </Waiting>
            </Queues>
            <Pointer width="13" height="20" viewBox="0 0 13 20" aria-hidden="true">
              <path d="M1 1v16l3.500-3.500L7 19l2.500-1L7.500 12.500H12z" fill="#000" stroke="#fff" strokeWidth="1.200" />
            </Pointer>
          </Panel>
        </Stage>
        <StatusBar>
          <StatusItem href="#" $gap={6}><External size={11} />View Site</StatusItem>
          <Divider $h={15} $color="#aaa" />
          <StatusItem href="#"><Badge>0</Badge>Visitors</StatusItem>
          <Divider $h={15} $color="#aaa" />
          <StatusItem href="#"><Badge>1</Badge>Administrator</StatusItem>
          <Divider $h={15} $color="#aaa" />
          <StatusItem href="#"><Badge>0</Badge>Messages</StatusItem>
          <Divider $h={15} $color="#aaa" />
          <StatusItem href="#" $gap={5}><Svg w={12} strokeWidth="3"><path d="M0 5.500h12" /></Svg>Log out</StatusItem>
          <Grow />
          <span>Joomla! 3.9.16 &nbsp;—&nbsp; © 2020 YourSites Server for WP Sites</span>
        </StatusBar>
      </Window>
    </Screen>
  );
}
